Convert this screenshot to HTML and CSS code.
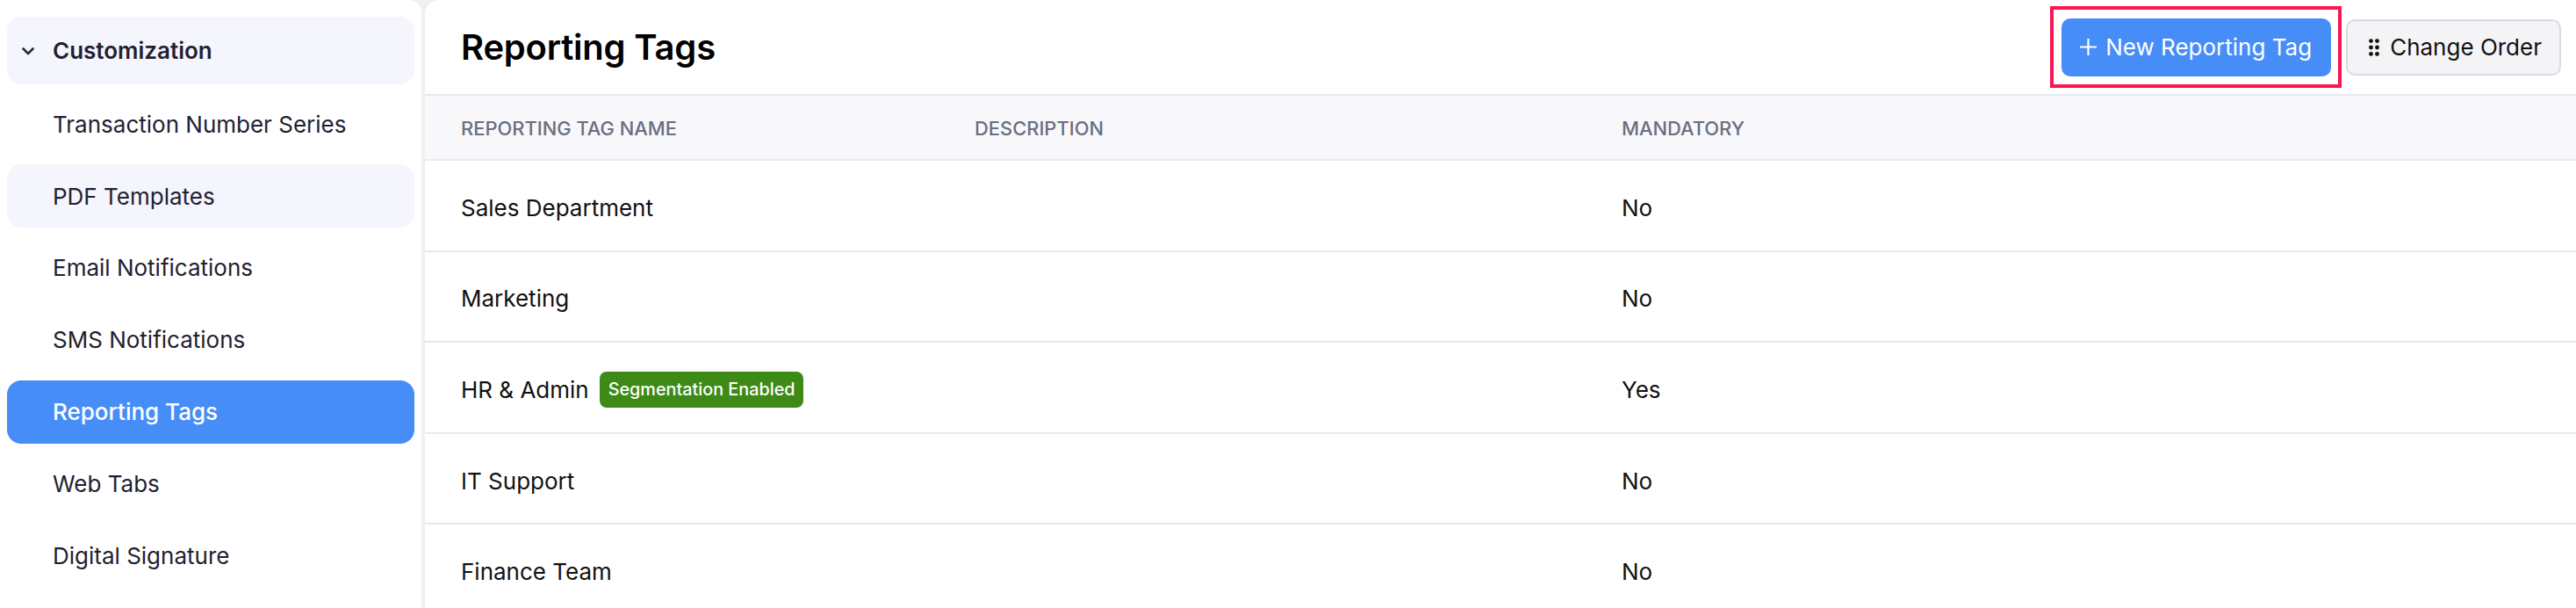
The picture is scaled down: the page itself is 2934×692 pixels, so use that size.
FILE: index.html
```html
<!DOCTYPE html>
<html lang="en">
<head>
<meta charset="utf-8">
<title>Reporting Tags</title>
<link rel="stylesheet" href="styles.css">
</head>
<body>
<div class="app">
  <aside class="sidebar">
    <div class="nav-head">
      <svg class="chev" width="14" height="9" viewBox="0 0 14 9"><path d="M1.5 1.5 L7 7 L12.5 1.5" fill="none" stroke="#2a2c38" stroke-width="2.6" stroke-linecap="round" stroke-linejoin="round"/></svg>
      <span>Customization</span>
    </div>
    <nav class="nav-list">
      <a class="nav-item">Transaction Number Series</a>
      <a class="nav-item hover">PDF Templates</a>
      <a class="nav-item">Email Notifications</a>
      <a class="nav-item">SMS Notifications</a>
      <a class="nav-item active">Reporting Tags</a>
      <a class="nav-item">Web Tabs</a>
      <a class="nav-item">Digital Signature</a>
    </nav>
  </aside>
  <main class="panel">
    <header class="panel-head">
      <h1 class="title">Reporting Tags</h1>
      <div class="actions">
        <button class="btn btn-primary">
          <svg width="21" height="21" viewBox="0 0 21 21"><path d="M10.5 1 V20 M1 10.5 H20" stroke="#fff" stroke-width="2.2" fill="none"/></svg>
          <span>New Reporting Tag</span>
          <span class="highlight"></span>
        </button>
        <button class="btn btn-secondary">
          <svg width="12" height="20" viewBox="0 0 12 20"><g fill="#111"><circle cx="2.5" cy="2.6" r="2.4"/><circle cx="9.5" cy="2.6" r="2.4"/><circle cx="2.5" cy="10" r="2.4"/><circle cx="9.5" cy="10" r="2.4"/><circle cx="2.5" cy="17.4" r="2.4"/><circle cx="9.5" cy="17.4" r="2.4"/></g></svg>
          <span>Change Order</span>
        </button>
      </div>
    </header>
    <div class="table">
      <div class="row head">
        <div class="cell c-name">REPORTING TAG NAME</div>
        <div class="cell c-desc">DESCRIPTION</div>
        <div class="cell c-mand">MANDATORY</div>
      </div>
      <div class="row">
        <div class="cell c-name">Sales Department</div>
        <div class="cell c-desc"></div>
        <div class="cell c-mand">No</div>
      </div>
      <div class="row">
        <div class="cell c-name">Marketing</div>
        <div class="cell c-desc"></div>
        <div class="cell c-mand">No</div>
      </div>
      <div class="row">
        <div class="cell c-name">HR &amp; Admin <span class="badge">Segmentation Enabled</span></div>
        <div class="cell c-desc"></div>
        <div class="cell c-mand">Yes</div>
      </div>
      <div class="row">
        <div class="cell c-name">IT Support</div>
        <div class="cell c-desc"></div>
        <div class="cell c-mand">No</div>
      </div>
      <div class="row">
        <div class="cell c-name">Finance Team</div>
        <div class="cell c-desc"></div>
        <div class="cell c-mand">No</div>
      </div>
    </div>
  </main>
</div>
</body>
</html>
```
FILE: styles.css
```css
* { box-sizing: border-box; }
html, body {
  margin: 0;
  height: 692px;
  overflow: hidden;
  background: #efeff4;
  font-family: Inter, "Noto Sans", sans-serif;
}
.app {
  display: flex;
  height: 692px;
  gap: 4px;
}
.sidebar {
  width: 480px;
  flex: none;
  background: #fff;
  border-top-right-radius: 14px;
  padding: 19px 8px 0 8px;
}
.nav-head {
  display: flex;
  align-items: center;
  height: 77px;
  padding-left: 17px;
  gap: 21px;
  background: #f5f5fd;
  border-radius: 16px;
  font-size: 26px;
  font-weight: 600;
  color: #1f2130;
}
.chev { flex: none; margin-top: 2px; }
.nav-list {
  display: flex;
  flex-direction: column;
  gap: 9.6px;
  margin-top: 9px;
}
.nav-item {
  display: flex;
  align-items: center;
  flex: none;
  height: 72.3px;
  padding-left: 52px;
  border-radius: 16px;
  font-size: 26px;
  color: #1f2130;
}
.nav-item.hover { background: #f5f5fd; }
.nav-item.active { background: #468df8; color: #fff; font-weight: 500; }
.panel {
  flex: 1;
  min-width: 0;
  background: #fff;
  border-top-left-radius: 16px;
  display: flex;
  flex-direction: column;
  overflow: hidden;
}
.panel-head {
  flex: none;
  height: 109px;
  display: flex;
  align-items: center;
  justify-content: space-between;
  padding: 0 17px 0 41px;
  border-bottom: 2px solid #e8e8f0;
}
.title {
  margin: 0;
  font-size: 40px;
  font-weight: 600;
  color: #000;
  letter-spacing: -0.2px;
}
.actions {
  display: flex;
  align-items: center;
  gap: 17px;
}
.btn {
  display: flex;
  align-items: center;
  font-family: inherit;
  font-size: 26px;
  border-radius: 10px;
  cursor: pointer;
}
.btn-primary {
  position: relative;
  height: 66px;
  padding: 0 22px 0 20px;
  gap: 9px;
  background: #468df8;
  border: none;
  color: #fff;
}
.highlight {
  position: absolute;
  left: -13px;
  right: -12px;
  top: -14px;
  bottom: -13px;
  border: 4px solid #fb1553;
  pointer-events: none;
}
.btn-secondary {
  height: 64px;
  padding: 0 20px 0 24px;
  gap: 12px;
  background: #f4f4f7;
  border: 2px solid #dadbe2;
  color: #111;
}
.table { display: flex; flex-direction: column; flex: none; }
.row {
  display: flex;
  align-items: center;
  flex: none;
  height: 103.6px;
  padding-top: 5px;
  border-bottom: 2px solid #e8e8f0;
  font-size: 26px;
  color: #111;
}
.row.head {
  height: 74px;
  padding-top: 2px;
  background: #f8f8fb;
  font-size: 21.9px;
  font-weight: 500;
  color: #6b6e80;
}
.cell { display: flex; align-items: center; }
.c-name { width: 626px; padding-left: 41px; gap: 12px; }
.c-desc { width: 737px; }
.c-mand { flex: 1; }
.badge {
  display: inline-flex;
  align-items: center;
  height: 41px;
  padding: 0 10px;
  background: #3d8a16;
  color: #fff;
  border-radius: 8px;
  font-size: 19.8px;
  font-weight: 500;
}
```
